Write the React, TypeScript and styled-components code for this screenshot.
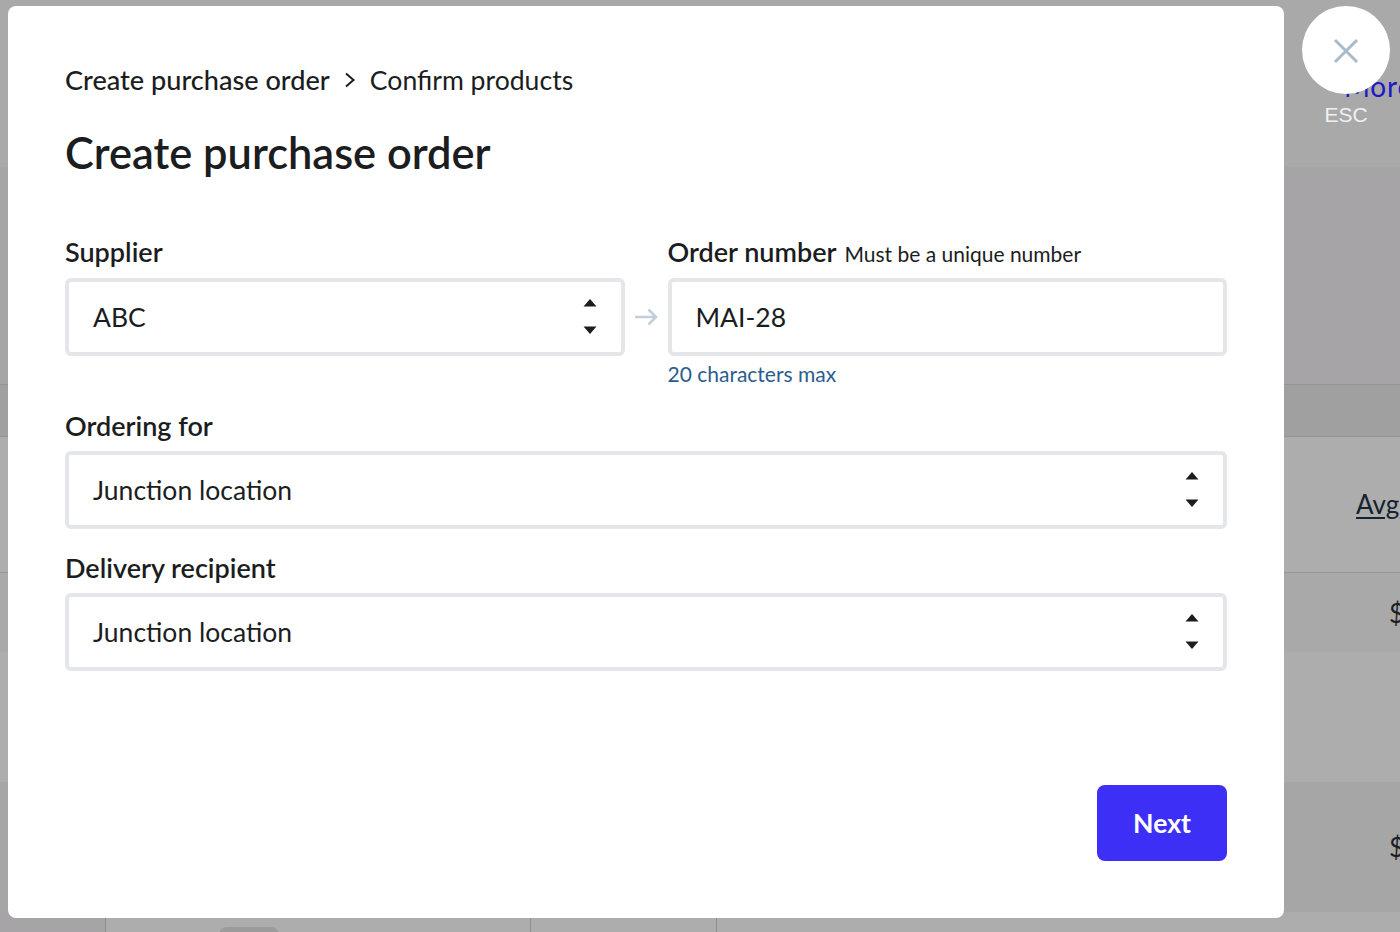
import styled, { createGlobalStyle } from "styled-components";

const GlobalStyle = createGlobalStyle`
  html, body {
    margin: 0;
    height: 100%;
    overflow: hidden;
    font-family: Lato, "Liberation Sans", sans-serif;
    background: #a9a9a9;
  }
  * { box-sizing: border-box; }
`;

/* ── Page behind the modal ── */

const Backdrop = styled.div`
  width: 1400px;
  height: 932px;
  overflow: hidden;
  display: flex;
  flex-direction: column;
  background: #a9a9a9;
`;

const TopBar = styled.div`
  height: 167px;
  flex: none;
  padding: 69px 0 0 1344px;
  white-space: nowrap;
`;

const MoreLink = styled.span`
  font-size: 28px;
  line-height: 34px;
  letter-spacing: 0.8px;
  color: #1f18c4;
`;

const Band = styled.div<{ $height: number; $bg: string; $line?: boolean }>`
  height: ${(p) => p.$height}px;
  flex: none;
  background: ${(p) => p.$bg};
  border-bottom: ${(p) => (p.$line ? "1px solid #959595" : "none")};
  display: flex;
  align-items: center;
  padding-left: 1356px;
  white-space: nowrap;
`;

const HeadCell = styled.span`
  font-size: 26px;
  line-height: 30px;
  margin-bottom: 2px;
  color: #16222e;
  text-decoration: underline;
  text-decoration-thickness: 2px;
  text-underline-offset: 3px;
`;

const PriceCell = styled.span`
  font-size: 26px;
  color: #1c1f24;
  margin-left: 33px;
`;

const FootGrid = styled.div`
  flex: 1;
  display: grid;
  grid-template-columns: 106px 425px 186px 1fr;
  background: #adadad;
`;

const FootCell = styled.div<{ $first?: boolean }>`
  border-right: 1px solid #8f8f8f;
  background: ${(p) => (p.$first ? "#a6a4a7" : "transparent")};
  &:last-child { border-right: none; }
`;

const FootPill = styled.div`
  width: 60px;
  height: 16px;
  margin: 15px 0 0 113px;
  border-radius: 8px;
  background: #9b9b9b;
`;

/* ── Modal ── */

const Modal = styled.div`
  position: absolute;
  left: 8px;
  top: 6px;
  width: 1276px;
  height: 912px;
  background: #fff;
  border-radius: 8px;
  padding: 57px;
  display: flex;
  flex-direction: column;
  color: #1b1d21;
`;

const Crumbs = styled.div`
  display: flex;
  align-items: baseline;
  gap: 14px;
  height: 34px;
  font-size: 26.6px;
`;

const CrumbParent = styled.span`
  font-size: 27.1px;
  font-weight: 500;
`;

const CrumbCurrent = styled.span`
  font-weight: 400;
`;

const ChevronIcon = styled.svg`
  align-self: center;
  flex: none;
`;

const Title = styled.h1`
  margin: 25px 0 0;
  font-size: 43.4px;
  line-height: 60px;
  font-weight: 600;
`;

const TopFields = styled.div`
  display: grid;
  grid-template-columns: 559.5px 43px 559.5px;
  margin-top: 51px;
`;

const Field = styled.div`
  display: flex;
  flex-direction: column;
  min-width: 0;
`;

const WideField = styled(Field)`
  margin-top: 19px;
`;

const DeliveryField = styled(Field)`
  margin-top: 20px;
`;

const Label = styled.div`
  height: 36px;
  margin-bottom: 8px;
  display: flex;
  align-items: center;
  gap: 8px;
  font-size: 27px;
  font-weight: 600;
`;

const TopLabel = styled(Label)`
  margin-bottom: 9px;
`;

const LabelHint = styled.span`
  font-size: 21px;
  font-weight: 400;
  padding-top: 5px;
`;

const Box = styled.div`
  height: 78px;
  border: 4px solid #e4e6ea;
  border-radius: 6px;
  padding: 0 24px;
  display: flex;
  align-items: center;
  justify-content: space-between;
  font-size: 26.5px;
  background: #fff;
`;

const Helper = styled.div`
  margin-top: 4px;
  font-size: 21px;
  line-height: 28px;
  color: #2b5c8f;
`;

const ArrowSlot = styled.div`
  height: 78px;
  margin-top: 45px;
  display: flex;
  align-items: center;
  justify-content: center;
`;

const Footer = styled.div`
  margin-top: auto;
  display: flex;
  justify-content: flex-end;
`;

const NextButton = styled.button`
  width: 130px;
  height: 76px;
  border: none;
  border-radius: 8px;
  background: #3d2ff5;
  color: #fff;
  font-family: inherit;
  font-size: 26.6px;
  font-weight: 700;
`;

/* ── Close ── */

const CloseArea = styled.div`
  position: absolute;
  left: 1302px;
  top: 6px;
  width: 88px;
  display: flex;
  flex-direction: column;
  align-items: center;
`;

const CloseCircle = styled.button`
  width: 88px;
  height: 88px;
  border: none;
  border-radius: 50%;
  background: #fff;
  display: flex;
  align-items: center;
  justify-content: center;
  padding: 1px 0 0;
`;

const EscLabel = styled.div`
  margin-top: 8px;
  font-family: "Liberation Sans", Arial, sans-serif;
  font-size: 21px;
  line-height: 26px;
  color: #f1f1f1;
`;

const UpDownIcon = styled.svg`
  flex: none;
`;

/* ── Drawings ── */

function UpDown() {
  return (
    <UpDownIcon width="14" height="38" viewBox="0 0 14 38" fill="#1b1d21">
      <path d="M7 1 13.5 8.5H0.5Z" />
      <path d="M0.5 28.5H13.5L7 36Z" />
    </UpDownIcon>
  );
}

function LinkArrow() {
  return (
    <svg width="24" height="18" viewBox="0 0 24 18" fill="none" stroke="#c3ced8" strokeWidth="2.6">
      <path d="M1 9H22M14.5 1.5 22 9 14.5 16.5" />
    </svg>
  );
}

function Chevron() {
  return (
    <ChevronIcon width="12" height="18" viewBox="0 0 12 18" fill="none" stroke="#1b1d21" strokeWidth="2">
      <path d="M2 2.5 9.5 9 2 15.5" />
    </ChevronIcon>
  );
}

function CloseIcon() {
  return (
    <svg width="26" height="26" viewBox="0 0 26 26" fill="none" stroke="#a9bbca" strokeWidth="3">
      <path d="M2 2 24 24M24 2 2 24" />
    </svg>
  );
}

export default function App() {
  return (
    <>
      <GlobalStyle />
      <Backdrop>
        <TopBar>
          <MoreLink>More</MoreLink>
        </TopBar>
        <Band $height={218} $bg="#a6a4a7" $line />
        <Band $height={52} $bg="#a0a0a0" $line />
        <Band $height={136} $bg="#adadad" $line>
          <HeadCell>Avg</HeadCell>
        </Band>
        <Band $height={79} $bg="#a9a9a9">
          <PriceCell>$</PriceCell>
        </Band>
        <Band $height={130} $bg="#adadad" />
        <Band $height={130} $bg="#a6a6a6">
          <PriceCell>$</PriceCell>
        </Band>
        <FootGrid>
          <FootCell $first />
          <FootCell>
            <FootPill />
          </FootCell>
          <FootCell />
          <FootCell />
        </FootGrid>
      </Backdrop>

      <Modal>
        <Crumbs>
          <CrumbParent>Create purchase order</CrumbParent>
          <Chevron />
          <CrumbCurrent>Confirm products</CrumbCurrent>
        </Crumbs>
        <Title>Create purchase order</Title>

        <TopFields>
          <Field>
            <TopLabel>Supplier</TopLabel>
            <Box>
              ABC
              <UpDown />
            </Box>
          </Field>
          <ArrowSlot>
            <LinkArrow />
          </ArrowSlot>
          <Field>
            <TopLabel>
              Order number <LabelHint>Must be a unique number</LabelHint>
            </TopLabel>
            <Box>MAI-28</Box>
            <Helper>20 characters max</Helper>
          </Field>
        </TopFields>

        <WideField>
          <Label>Ordering for</Label>
          <Box>
            Junction location
            <UpDown />
          </Box>
        </WideField>

        <DeliveryField>
          <Label>Delivery recipient</Label>
          <Box>
            Junction location
            <UpDown />
          </Box>
        </DeliveryField>

        <Footer>
          <NextButton>Next</NextButton>
        </Footer>
      </Modal>

      <CloseArea>
        <CloseCircle>
          <CloseIcon />
        </CloseCircle>
        <EscLabel>ESC</EscLabel>
      </CloseArea>
    </>
  );
}
